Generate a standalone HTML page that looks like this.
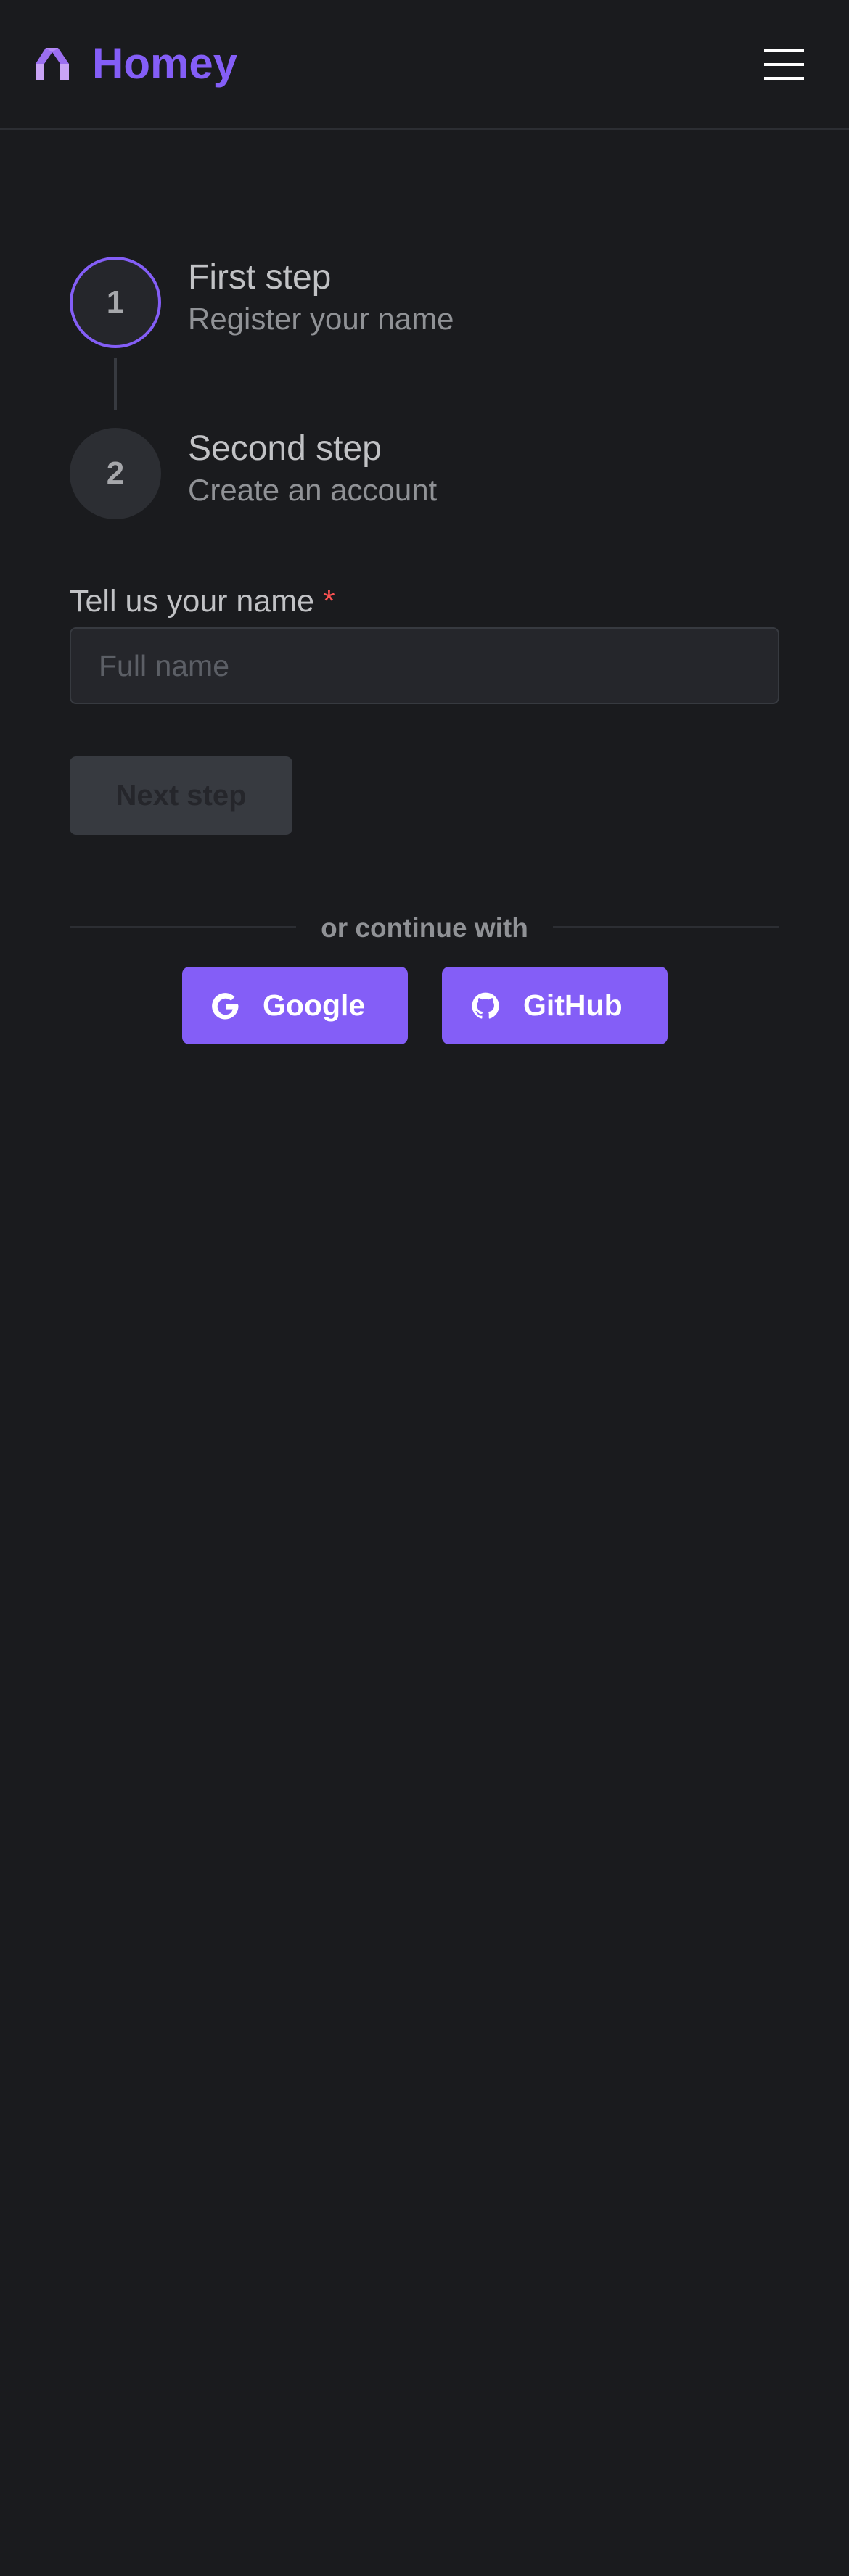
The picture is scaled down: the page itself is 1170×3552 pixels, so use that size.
<!DOCTYPE html>
<html><head><meta charset="utf-8"><style>
*{margin:0;padding:0;box-sizing:border-box}
html,body{width:1170px;height:3552px;background:#1a1b1e;overflow:hidden}
body{position:relative;font-family:"Liberation Sans",sans-serif}
.a{position:absolute;white-space:nowrap}
</style></head><body>
<svg class="a" style="left:49px;top:66px" width="46" height="45" viewBox="0 0 46 45">
<polygon points="0,22 14,0 31,0 46,22 34,22 23,6 12,22" fill="#9c6ff0"/>
<polygon points="14,0 31,0 23,6" fill="#b48af5"/>
<rect x="0" y="22" width="12" height="23" fill="#c9a4f5"/>
<rect x="34" y="22" width="12" height="23" fill="#c9a4f5"/>
</svg>
<div class="a" style="left:127px;top:53px;font-size:60px;font-weight:700;color:#845ef7;line-height:70px">Homey</div>
<div class="a" style="left:1053px;top:68px;width:55px;height:4px;background:#fff"></div>
<div class="a" style="left:1053px;top:87px;width:55px;height:4px;background:#fff"></div>
<div class="a" style="left:1053px;top:106px;width:55px;height:4px;background:#fff"></div>
<div class="a" style="left:0;top:177px;width:1170px;height:2px;background:#2c2e33"></div>

<div class="a" style="left:96px;top:354px;width:126px;height:126px;border-radius:50%;border:4px solid #845ef7;background:#25262b;color:#a6a7ab;font-size:44px;font-weight:700;text-align:center;line-height:118px">1</div>
<div class="a" style="left:157px;top:494px;width:4px;height:72px;background:#373a40"></div>
<div class="a" style="left:96px;top:590px;width:126px;height:126px;border-radius:50%;background:#2c2e33;color:#a6a7ab;font-size:44px;font-weight:700;text-align:center;line-height:126px">2</div>
<div class="a" style="left:259px;top:355px;font-size:48px;color:#c1c2c5;line-height:56px">First step</div>
<div class="a" style="left:259px;top:415px;font-size:42px;color:#909296;line-height:50px">Register your name</div>
<div class="a" style="left:259px;top:591px;font-size:48px;color:#c1c2c5;line-height:56px">Second step</div>
<div class="a" style="left:259px;top:651px;font-size:42px;color:#909296;line-height:50px">Create an account</div>

<div class="a" style="left:96px;top:804px;font-size:43px;color:#c1c2c5;line-height:50px">Tell us your name <span style="color:#fa5252">*</span></div>
<div class="a" style="left:96px;top:865px;width:978px;height:106px;border:2px solid #373a40;border-radius:9px;background:#25262b"></div>
<div class="a" style="left:136px;top:893px;font-size:41px;color:#5c5f66;line-height:50px">Full name</div>
<div class="a" style="left:96px;top:1043px;width:307px;height:108px;border-radius:9px;background:#373a40;color:#25262b;font-size:40px;font-weight:700;text-align:center;line-height:108px">Next step</div>

<div class="a" style="left:96px;top:1277px;width:312px;height:3px;background:#2c2e33"></div>
<div class="a" style="left:762px;top:1277px;width:312px;height:3px;background:#2c2e33"></div>
<div class="a" style="left:408px;top:1258px;width:354px;text-align:center;font-size:37px;font-weight:700;color:#909296;line-height:44px">or continue with</div>

<div class="a" style="left:251px;top:1333px;width:311px;height:107px;border-radius:10px;background:#845ef7"></div>
<svg class="a" style="left:290px;top:1367px" width="42" height="42" viewBox="0 0 24 24"><path d="M21.6 10.2H12v3.9h5.5c-.6 2.7-2.8 4.3-5.5 4.3a6.4 6.4 0 1 1 4.2-11.2l2.9-2.8A10.4 10.4 0 1 0 22 12c0-.6 0-1.2-.4-1.8z" fill="#fff"/></svg>
<div class="a" style="left:362px;top:1361px;font-size:41px;font-weight:700;color:#fff;line-height:50px">Google</div>
<div class="a" style="left:609px;top:1333px;width:311px;height:107px;border-radius:10px;background:#845ef7"></div>
<svg class="a" style="left:648px;top:1366px" width="42" height="42" viewBox="0 0 24 24"><path d="M12 1.5a10.5 10.5 0 0 0-3.3 20.5c.5.1.7-.2.7-.5v-1.8c-2.9.6-3.5-1.4-3.5-1.4-.5-1.2-1.2-1.5-1.2-1.5-1-.7.1-.7.1-.7 1 .1 1.6 1.1 1.6 1.1.9 1.6 2.5 1.100 3.1.9.1-.7.4-1.1.7-1.4-2.3-.3-4.8-1.2-4.8-5.2 0-1.1.4-2.1 1.1-2.8-.1-.3-.5-1.3.1-2.8 0 0 .9-.3 2.9 1.1a10 10 0 0 1 5.2 0c2-1.4 2.9-1.1 2.9-1.1.6 1.5.2 2.5.1 2.8.7.7 1.1 1.7 1.1 2.8 0 4-2.5 4.9-4.8 5.2.4.3.7 1 .7 1.9v2.9c0 .3.2.6.7.5A10.5 10.5 0 0 0 12 1.5z" fill="#fff"/></svg>
<div class="a" style="left:721px;top:1361px;font-size:41px;font-weight:700;color:#fff;line-height:50px">GitHub</div>
</body></html>
